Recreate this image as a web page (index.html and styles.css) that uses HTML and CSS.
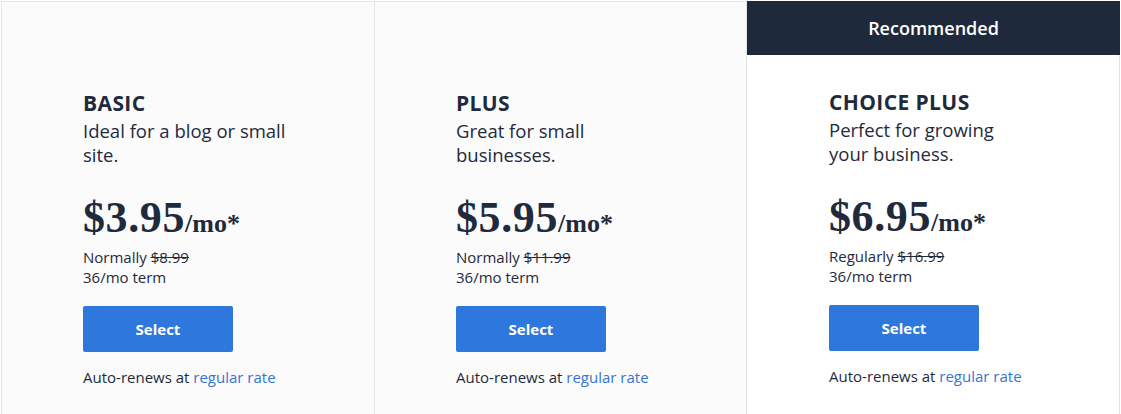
FILE: index.html
```html
<!DOCTYPE html>
<html lang="en">
<head>
    <meta charset="UTF-8">
    <meta name="viewport" content="width=device-width, initial-scale=1.0">
    <title>Hosting Plans</title>
    <link rel="stylesheet" href="styles.css">
</head>
<body>

<div class="plans">
    <div class="plan">
        <div class="plan-body">
            <h2 class="plan-name">BASIC</h2>
            <p class="plan-desc">Ideal for a blog or small site.</p>
            <div class="price">$3.95<span class="per">/mo*</span></div>
            <p class="terms">Normally <s>$8.99</s><br>36/mo term</p>
            <button class="select-btn">Select</button>
            <p class="renew">Auto-renews at <a href="#">regular rate</a></p>
        </div>
    </div>

    <div class="plan">
        <div class="plan-body">
            <h2 class="plan-name">PLUS</h2>
            <p class="plan-desc">Great for small businesses.</p>
            <div class="price">$5.95<span class="per">/mo*</span></div>
            <p class="terms">Normally <s>$11.99</s><br>36/mo term</p>
            <button class="select-btn">Select</button>
            <p class="renew">Auto-renews at <a href="#">regular rate</a></p>
        </div>
    </div>

    <div class="plan featured">
        <div class="flag">Recommended</div>
        <div class="plan-body">
            <h2 class="plan-name">CHOICE PLUS</h2>
            <p class="plan-desc">Perfect for growing your business.</p>
            <div class="price">$6.95<span class="per">/mo*</span></div>
            <p class="terms">Regularly <s>$16.99</s><br>36/mo term</p>
            <button class="select-btn">Select</button>
            <p class="renew">Auto-renews at <a href="#">regular rate</a></p>
        </div>
    </div>
</div>

</body>
</html>
```

FILE: styles.css
```css
body { margin: 0; padding: 1px 0 0 1px; background: #fff; color: #1f2a3c; font-family: "Open Sans", "Noto Sans", Arial, sans-serif; }
.plans { display: grid; grid-template-columns: 373px 372px 374px; height: 413px; }
.plan { background: #fbfbfb; border-left: 1px solid #e5e5e5; border-top: 1px solid #e5e5e5; }
.plan.featured { background: #fff; border-top: none; border-right: 1px solid #e5e5e5; display: flex; flex-direction: column; }
.flag { background: #1e2a3c; color: #fff; height: 54px; margin-right: -1px; display: flex; align-items: center; justify-content: center; font-size: 18px; font-weight: 600; padding-bottom: 1px; box-sizing: border-box; }
.plan-body { padding: 88px 0 0 81px; }
.featured .plan-body { padding: 34px 0 0 82px; }
.plan-name { margin: 0; font-size: 21px; font-weight: 700; line-height: 26px; letter-spacing: 0.4px; }
.plan-desc { margin: 3px 0 0; font-size: 18.5px; line-height: 24px; max-width: 205px; }
.price { margin-top: 29px; font-family: "Liberation Serif", "Times New Roman", serif; font-weight: 700; font-size: 44px; line-height: 44px; letter-spacing: 0.6px; }
.per { font-size: 26px; line-height: 1; letter-spacing: 0; }
.terms { margin: 7px 0 0; font-size: 15px; line-height: 20px; }
.terms s { text-decoration-thickness: 1px; }
.select-btn { display: block; margin-top: 19px; width: 150px; height: 46px; border: none; border-radius: 2px; background: #2e77dc; color: #fff; font-family: inherit; font-size: 15px; font-weight: 700; cursor: pointer; }
.renew { margin: 15px 0 0; font-size: 15px; line-height: 20px; }
.renew a { color: #3575d3; text-decoration: none; }
```
